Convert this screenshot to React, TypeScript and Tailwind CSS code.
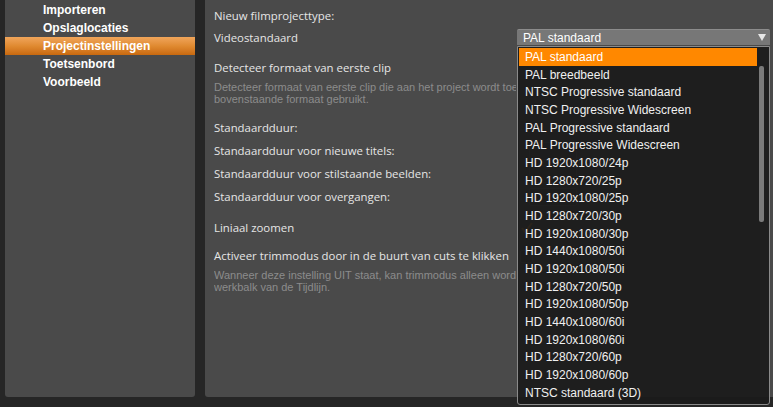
import { useState } from 'react'

const MENU = ['Importeren', 'Opslaglocaties', 'Projectinstellingen', 'Toetsenbord', 'Voorbeeld']

const FORMATS = [
  'PAL standaard',
  'PAL breedbeeld',
  'NTSC Progressive standaard',
  'NTSC Progressive Widescreen',
  'PAL Progressive standaard',
  'PAL Progressive Widescreen',
  'HD 1920x1080/24p',
  'HD 1280x720/25p',
  'HD 1920x1080/25p',
  'HD 1280x720/30p',
  'HD 1920x1080/30p',
  'HD 1440x1080/50i',
  'HD 1920x1080/50i',
  'HD 1280x720/50p',
  'HD 1920x1080/50p',
  'HD 1440x1080/60i',
  'HD 1920x1080/60i',
  'HD 1280x720/60p',
  'HD 1920x1080/60p',
  'NTSC standaard (3D)',
]

const label = "font-['Open_Sans',sans-serif] text-[11.4px] leading-[16px] text-[#e6e6e6] whitespace-nowrap"
const desc =
  "w-[302px] overflow-hidden font-['Liberation_Sans',Arial,sans-serif] text-[11px] leading-[12px] text-[#8c8c8c] whitespace-nowrap"

// Controls sit under the open dropdown, only their frames shine through
function TimeField() {
  return <div className="ml-[315px] -my-[2px] h-[18px] w-[48px] rounded-[2px] border border-[#6a6a6a] bg-[#3a3a3a]" />
}

function Row({ text, children, mt }: { text: string; children?: React.ReactNode; mt: string }) {
  return (
    <div className={`flex items-center ${mt}`}>
      <span className={`${label} w-0`}>{text}</span>
      {children}
    </div>
  )
}

export default function App() {
  const [active, setActive] = useState(2)
  const [selected] = useState(0)

  return (
    <div className="flex h-[407px] w-[773px] flex-col overflow-hidden bg-[#262626]">
      <div className="flex h-[397px] shrink-0 gap-[10px] pl-[5px]">
        {/* Settings categories */}
        <div className="w-[190px] rounded-b-[3px] bg-[#4a4a4a] pt-[1px]">
          {MENU.map((m, i) => (
            <div
              key={m}
              onClick={() => setActive(i)}
              className={`flex h-[18px] cursor-default items-center pl-[38px] font-['Liberation_Sans',Arial,sans-serif] text-[12px] font-bold text-white ${
                i === active ? 'bg-gradient-to-b from-[#f0a55a] via-[#e08a30] to-[#c8690e]' : ''
              }`}
            >
              {m}
            </div>
          ))}
        </div>

        {/* Project settings */}
        <div className="relative flex-1 rounded-bl-[3px] bg-[#4a4a4a] pl-[9px] pt-[8px]">
          <div className={label}>Nieuw filmprojecttype:</div>
          <div className={`${label} mt-[6px]`}>Videostandaard</div>
          <div className={`${label} mt-[14px]`}>Detecteer formaat van eerste clip</div>
          <div className={`${desc} mt-[5px]`}>
            Detecteer formaat van eerste clip die aan het project wordt toegevoegd.
            <br />
            bovenstaande formaat gebruikt.
          </div>

          <Row text="Standaardduur:" mt="mt-[15px]" />
          <Row text="Standaardduur voor nieuwe titels:" mt="mt-[7px]">
            <TimeField />
          </Row>
          <Row text="Standaardduur voor stilstaande beelden:" mt="mt-[7px]">
            <TimeField />
          </Row>
          <Row text="Standaardduur voor overgangen:" mt="mt-[7px]">
            <TimeField />
          </Row>
          <Row text="Liniaal zoomen" mt="mt-[15px]">
            <svg className="ml-[306px]" width="14" height="14" viewBox="0 0 14 14">
              <path d="M2 7l3 4 7-9" fill="none" stroke="#f08a1a" strokeWidth="2" />
            </svg>
          </Row>
          <Row text="Activeer trimmodus door in de buurt van cuts te klikken" mt="mt-[12px]">
            <div className="ml-[306px] h-[13px] w-[13px] rounded-[2px] border border-[#6a6a6a] bg-[#3a3a3a]" />
          </Row>
          <div className={`${desc} mt-[5px]`}>
            Wanneer deze instelling UIT staat, kan trimmodus alleen worden geopend
            <br />
            werkbalk van de Tijdlijn.
          </div>

          {/* Open video standard dropdown */}
          <div className="absolute left-[312px] top-[29px] z-10 w-[253px] font-['Liberation_Sans',Arial,sans-serif] text-[12px]">
            <div className="flex h-[16px] items-center justify-between rounded-t-[2px] border-t border-[#8c8c8c] bg-[#777777] pl-[6px] pr-[4px] text-white">
              <span>{FORMATS[selected]}</span>
              <svg width="8" height="7" viewBox="0 0 8 7">
                <path d="M0 0h8L4 7z" fill="#e8e8e8" />
              </svg>
            </div>
            <div className="relative mt-[1px] h-[359px] rounded-b-[3px] border border-[#8a8a8a] bg-[#1b1b1b]/[0.93] pl-[1px] pr-[12px] pt-[1px]">
              {FORMATS.map((f, i) => (
                <div
                  key={f}
                  className={`flex h-[17.68px] items-center pl-[6px] leading-none ${
                    i === selected ? 'bg-[#ff8800] text-white' : 'text-[#f0f0f0]'
                  }`}
                >
                  {f}
                </div>
              ))}
              <div className="absolute right-[5px] top-[19px] h-[156px] w-[5px] rounded-[2px] bg-[#7a7a7a]" />
            </div>
          </div>
        </div>
      </div>
    </div>
  )
}
